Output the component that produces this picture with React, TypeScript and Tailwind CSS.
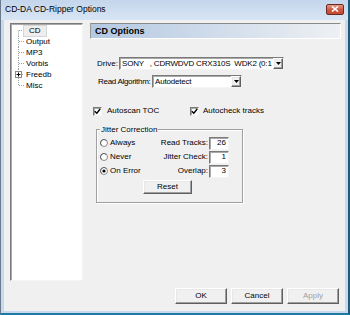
import React from "react";

const sunken =
  "border border-t-[#7a7a7a] border-l-[#7a7a7a] border-r-[#f4f4f4] border-b-[#f4f4f4] shadow-[inset_1px_1px_0_#a9a9a9]";
const raised =
  "border border-t-[#ffffff] border-l-[#ffffff] border-r-[#5f5f5f] border-b-[#5f5f5f] shadow-[inset_-1px_-1px_0_#a0a0a0,inset_1px_1px_0_#e8e8e8]";

function TreeGutter({ kind }: { kind: "first" | "mid" | "last" | "plus" }) {
  const y1 = kind === "first" ? 5.5 : 0;
  const y2 = kind === "last" ? 5.5 : 11;
  return (
    <svg width="13" height="11" className="flex-none">
      {kind === "plus" ? (
        <>
          <line x1="7.5" y1="0" x2="7.5" y2="2" stroke="#a0a0a0" strokeDasharray="1 1" />
          <line x1="7.5" y1="9" x2="7.5" y2="11" stroke="#a0a0a0" strokeDasharray="1 1" />
          <line x1="11" y1="5.5" x2="13" y2="5.5" stroke="#a0a0a0" strokeDasharray="1 1" />
          <rect x="4.5" y="2.5" width="6" height="6" fill="#fff" stroke="#8a8a8a" />
          <line x1="5.5" y1="5.5" x2="9.5" y2="5.5" stroke="#000" />
          <line x1="7.5" y1="3.5" x2="7.5" y2="7.5" stroke="#000" />
        </>
      ) : (
        <>
          <line x1="7.5" y1={y1} x2="7.5" y2={y2} stroke="#a0a0a0" strokeDasharray="1 1" />
          <line x1="8" y1="5.5" x2="13" y2="5.5" stroke="#a0a0a0" strokeDasharray="1 1" />
        </>
      )}
    </svg>
  );
}

function TreeItem({
  label,
  kind,
  selected,
}: {
  label: string;
  kind: "first" | "mid" | "last" | "plus";
  selected?: boolean;
}) {
  return (
    <div className="flex items-center h-[11px]">
      <TreeGutter kind={kind} />
      <span
        className={
          "text-[8px] leading-[10px] px-[2px] " +
          (selected ? "bg-[#eeeeee] border border-[#d6d6d6] px-[5px] ml-[-1px]" : "")
        }
      >
        {label}
      </span>
    </div>
  );
}

function Select({ width, text }: { width: string; text: string }) {
  return (
    <div className={"h-[13px] bg-white flex items-center flex-none " + width + " " + sunken}>
      <span className="flex-1 overflow-hidden whitespace-pre text-[8px] leading-[10px] pl-[2px] tracking-[-0.2px]">{text}</span>
      <div className={"w-[10px] h-[11px] flex-none bg-[#f0f0f0] flex items-center justify-center " + raised}>
        <svg width="5" height="3">
          <polygon points="0,0 5,0 2.5,3" fill="#000" />
        </svg>
      </div>
    </div>
  );
}

function Checkbox() {
  return (
    <div className={"w-[9px] h-[9px] bg-white flex-none flex items-center justify-center " + sunken}>
      <svg width="7" height="7">
        <path d="M0.8 3.2 L2.8 5.2 L6.2 1" stroke="#000" strokeWidth="1.4" fill="none" />
      </svg>
    </div>
  );
}

function Radio({ checked }: { checked?: boolean }) {
  return (
    <svg width="8" height="8" className="flex-none">
      <circle cx="4" cy="4" r="3.5" fill="#fff" stroke="#8a8a8a" />
      <path d="M1.5 6.5 A3.5 3.5 0 0 1 6.5 1.5" stroke="#6a6a6a" fill="none" />
      {checked && <circle cx="4" cy="4" r="1.6" fill="#000" />}
    </svg>
  );
}

function Field({ label, value, radio, checked }: { label: string; value: string; radio: string; checked?: boolean }) {
  return (
    <div className="flex items-center h-[14px]">
      <div className="flex items-center ml-[3px] w-[50px]">
        <Radio checked={checked} />
        <span className="ml-[2px] text-[8px] leading-[10px]">{radio}</span>
      </div>
      <span className="flex-1 text-right text-[8px] leading-[10px] mr-[1px]">{label}</span>
      <div className={"w-[20px] h-[13px] bg-white flex-none flex items-center justify-end pr-[2px] text-[8px] leading-[10px] " + sunken}>
        {value}
      </div>
      <div className="w-[13px] flex-none" />
    </div>
  );
}

function Button({ label, disabled, width }: { label: string; disabled?: boolean; width: string }) {
  return (
    <div
      className={
        "h-[16px] flex-none bg-[#f0f0f0] flex items-center justify-center text-[8px] leading-[10px] " +
        width +
        " " +
        raised +
        (disabled ? " text-[#a0a0a0]" : " text-black")
      }
    >
      {label}
    </div>
  );
}

export default function App() {
  return (
    <div className="w-[350px] h-[315px] flex flex-col bg-[#c9d9ed] border-l border-l-[#6a7a8c] border-r-2 border-r-[#1d5a7c] border-b-2 border-b-[#1f7aa3] font-['Liberation_Sans',Arial,sans-serif] text-black overflow-hidden">
      <div className="h-[20px] flex-none flex items-center justify-between pl-[4px] pr-[4px] pb-[2px] bg-gradient-to-b from-[#c4d6ec] to-[#d8e5f4]">
        <span className="text-[8.5px] leading-[10px] text-black">CD-DA CD-Ripper Options</span>
        <div className="w-[18px] h-[11px] rounded-[2px] border border-[#6e2a20] bg-gradient-to-b from-[#e09a88] via-[#cf5a44] to-[#c04a34] flex items-center justify-center">
          <svg width="8" height="6">
            <path d="M1 0.5 L7 5.5 M7 0.5 L1 5.5" stroke="#fff" strokeWidth="1.6" />
          </svg>
        </div>
      </div>
      <div className="flex-1 mx-[3px] mb-[2px] bg-[#f0f0f0] flex flex-col">
        <div className="flex pl-[6px] pt-[3px]">
          <div className={"w-[73px] h-[258px] bg-white flex-none pt-[1px] " + sunken}>
            <TreeItem label="CD" kind="first" selected />
            <TreeItem label="Output" kind="mid" />
            <TreeItem label="MP3" kind="mid" />
            <TreeItem label="Vorbis" kind="mid" />
            <TreeItem label="Freedb" kind="plus" />
            <TreeItem label="Misc" kind="last" />
          </div>
          <div className="ml-[7px] w-[251px] flex-none flex flex-col">
            <div className="h-[16px] flex items-center pl-[4px] border border-t-[#8a8a8a] border-l-[#9a9a9a] border-r-[#ffffff] border-b-[#ffffff] bg-gradient-to-r from-[#b3c8e2] to-[#eef0f3]">
              <span className="text-[9px] leading-[11px] font-bold">CD Options</span>
            </div>
            <div className="flex items-center mt-[18px] pl-[7px]">
              <span className="w-[22px] flex-none text-[8px] leading-[10px]">Drive:</span>
              <Select width="w-[165px]" text="SONY   , CDRWDVD CRX310S  WDK2 (0:1" />
            </div>
            <div className="flex items-center mt-[5px] pl-[8px]">
              <span className="w-[54px] flex-none whitespace-nowrap text-[8px] leading-[10px] tracking-[-0.3px]">Read Algorithm:</span>
              <Select width="w-[90px]" text="Autodetect" />
            </div>
            <div className="flex items-center mt-[18px] pl-[3px]">
              <div className="w-[97px] flex-none flex items-center">
                <Checkbox />
                <span className="ml-[5px] text-[8px] leading-[10px]">Autoscan TOC</span>
              </div>
              <Checkbox />
              <span className="ml-[4px] text-[8px] leading-[10px]">Autocheck tracks</span>
            </div>
            <fieldset className="ml-[6px] mt-[9px] w-[147px] border border-[#a0a0a0] shadow-[inset_1px_1px_0_#fff,1px_1px_0_#fff] pb-[8px]">
              <legend className="ml-[3px] px-[1px] text-[8px] leading-[9px]">Jitter Correction</legend>
              <div className="mt-[2px] flex flex-col">
                <Field radio="Always" label="Read Tracks:" value="26" />
                <Field radio="Never" label="Jitter Check:" value="1" />
                <Field radio="On Error" label="Overlap:" value="3" checked />
              </div>
              <div className="mt-[2px] ml-[46px]">
                <Button label="Reset" width="w-[49px] !h-[14px]" />
              </div>
            </fieldset>
          </div>
        </div>
        <div className="flex justify-end gap-[4px] pr-[6px] mt-[7px]">
          <Button label="OK" width="w-[52px]" />
          <Button label="Cancel" width="w-[52px]" />
          <Button label="Apply" width="w-[52px]" disabled />
        </div>
      </div>
    </div>
  );
}
